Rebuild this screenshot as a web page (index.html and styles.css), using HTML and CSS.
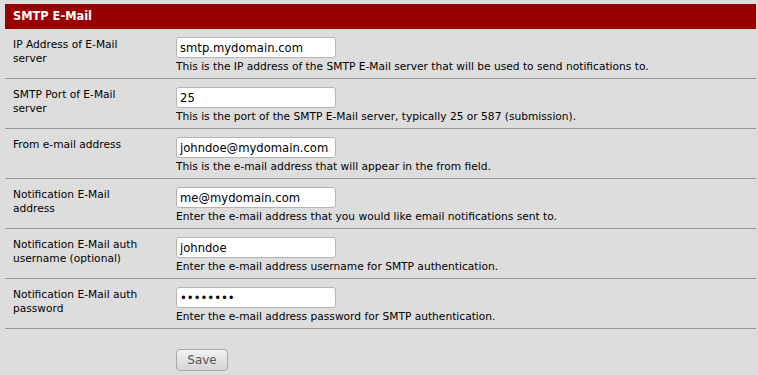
FILE: index.html
```html
<!DOCTYPE html>
<html lang="en">
<head>
  <meta charset="UTF-8">
  <title>SMTP E-Mail</title>
  <link rel="stylesheet" href="styles.css">
</head>
<body>
  <div class="settings">

    <!-- section header -->
    <div class="section-head">SMTP E-Mail</div>

    <div class="row">
      <div class="label">IP Address of E-Mail server</div>
      <div class="field">
        <input class="text-in" type="text" value="smtp.mydomain.com">
        <div class="hint">This is the IP address of the SMTP E-Mail server that will be used to send notifications to.</div>
      </div>
    </div>

    <div class="row">
      <div class="label">SMTP Port of E-Mail server</div>
      <div class="field">
        <input class="text-in" type="text" value="25">
        <div class="hint">This is the port of the SMTP E-Mail server, typically 25 or 587 (submission).</div>
      </div>
    </div>

    <div class="row">
      <div class="label">From e-mail address</div>
      <div class="field">
        <input class="text-in" type="text" value="johndoe@mydomain.com">
        <div class="hint">This is the e-mail address that will appear in the from field.</div>
      </div>
    </div>

    <div class="row">
      <div class="label">Notification E-Mail address</div>
      <div class="field">
        <input class="text-in" type="text" value="me@mydomain.com">
        <div class="hint">Enter the e-mail address that you would like email notifications sent to.</div>
      </div>
    </div>

    <div class="row">
      <div class="label">Notification E-Mail auth username (optional)</div>
      <div class="field">
        <input class="text-in" type="text" value="johndoe">
        <div class="hint">Enter the e-mail address username for SMTP authentication.</div>
      </div>
    </div>

    <div class="row">
      <div class="label">Notification E-Mail auth password</div>
      <div class="field">
        <input class="text-in" type="password" value="password">
        <div class="hint">Enter the e-mail address password for SMTP authentication.</div>
      </div>
    </div>

    <!-- submit row -->
    <div class="row row-submit">
      <div class="label"></div>
      <div class="field">
        <button class="btn-save" type="button">Save</button>
      </div>
    </div>

  </div>
</body>
</html>
```

FILE: styles.css
```css
/* page background */
html, body {
  margin: 0;
  padding: 0;
  background: #dddddd;
}

body {
  padding: 4px 2px 0 5px;
  font-family: "DejaVu Sans", Verdana, sans-serif;
  font-size: 10.65px;
  color: #000;
}

/* dark red title bar */
.section-head {
  height: 25px;
  line-height: 25px;
  padding-left: 8px;
  background: #990000;
  color: #fff;
  font-weight: bold;
  font-size: 11.4px;
}

/* one setting per row: label | input + hint */
.row {
  display: grid;
  grid-template-columns: 163px 1fr;
  height: 49px;
  border-bottom: 1px solid #999999;
}
.label {
  padding: 9px 25px 0 8px;
  line-height: 14px;
}
.field {
  padding: 8px 8px 0 8px;
}

/* text inputs */
.text-in {
  display: block;
  box-sizing: border-box;
  width: 160px;
  height: 21px;
  margin: 0;
  padding: 0 3px;
  border: 1px solid #b5b5b5;
  border-radius: 3px;
  background: #fff;
  font-family: "DejaVu Sans", Verdana, sans-serif;
  font-size: 11.6px;
  color: #000;
}
.hint {
  margin-top: 2px;
  line-height: 14px;
}

/* submit row */
.row-submit {
  border-bottom: none;
}
.row-submit .field {
  padding-top: 20px;
}
.btn-save {
  width: 52px;
  height: 22px;
  padding: 0;
  border: 1px solid #a9a9a9;
  border-radius: 4px;
  background: linear-gradient(#f2f2f2, #d4d4d4);
  font-family: "DejaVu Sans", Verdana, sans-serif;
  font-size: 12px;
  color: #555;
}
```
